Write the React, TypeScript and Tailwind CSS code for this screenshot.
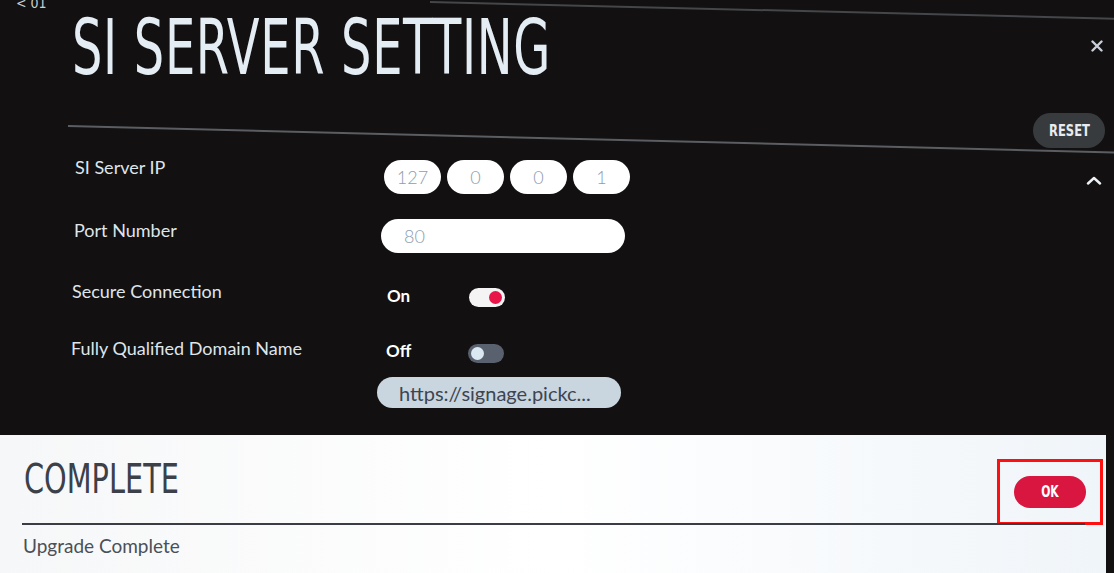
import React from 'react';

const ipParts = ['127', '0', '0', '1'];

const Toggle: React.FC<{ on: boolean }> = ({ on }) => (
  <div
    className={`w-[36px] h-[19px] rounded-full flex items-center px-[3px] ${on ? 'bg-[#f4f4f4] justify-end' : 'bg-[#5a616e] justify-start'}`}
  >
    <div className={`w-[13px] h-[13px] rounded-full ${on ? 'bg-[#e8174a]' : 'bg-[#dbe8f2]'}`} />
  </div>
);

const App: React.FC = () => {
  const cond = { fontFamily: '"DejaVu Sans Condensed", "DejaVu Sans", sans-serif' };
  const body = { fontFamily: 'Lato, "Noto Sans", sans-serif' };

  return (
    <div className="w-[1114px] h-[573px] bg-[#121010] overflow-hidden flex flex-col" style={body}>
      {/* Dark settings area */}
      <div className="h-[435px] shrink-0 flex flex-col relative">
        {/* faint top rule */}
        <div className="absolute left-[430px] top-[1px] w-[700px] h-[2px] bg-[#44464a] origin-left rotate-[1.4deg]" />
        <div className="absolute left-[16px] top-[-7px] text-[14px] text-[#c9ced6]" style={cond}>
          &lt; 01
        </div>

        {/* Header */}
        <div className="h-[125px] shrink-0 flex justify-between">
          <div className="pl-[72px] pt-[10px]">
            <h1
              className="text-[76px] leading-none text-[#e4ecf4] origin-left scale-x-[0.7] whitespace-nowrap tracking-[1px]"
              style={cond}
            >
              SI SERVER SETTING
            </h1>
          </div>
          <div className="flex flex-col items-end pr-[9px] pt-[40px]">
            <svg width="12" height="12" viewBox="0 0 12 12" className="shrink-0 mr-[2px]">
              <path d="M1.5 1.5 L10.5 10.5 M10.5 1.5 L1.5 10.5" stroke="#c9ceda" strokeWidth="2.4" strokeLinecap="round" />
            </svg>
            <button
              className="shrink-0 mt-[61px] w-[72px] h-[35px] rounded-full bg-[#383b3d] text-[#e8ecf0] text-[16px] font-bold"
              style={cond}
            >
              <span className="inline-block scale-x-[0.8]">RESET</span>
            </button>
          </div>
        </div>

        {/* rule under title */}
        <div className="shrink-0 ml-[68px] w-[1060px] h-[2px] bg-[#5a5d62] origin-left rotate-[1.45deg]" />

        {/* Rows */}
        <div className="flex">
          <div className="flex-1">
            <div className="flex h-[40px] mt-[30px] pl-[75px]">
              <div className="w-[309px] text-[18px] leading-5 text-[#dfe5ec]">SI Server IP</div>
              <div className="flex gap-[6px] mt-[3px]">
                {ipParts.map((p, i) => (
                  <div
                    key={i}
                    className="w-[57px] h-[34px] rounded-full bg-white flex items-center justify-center text-[18px] font-light text-[#8d9db0]"
                  >
                    {p}
                  </div>
                ))}
              </div>
            </div>

            <div className="flex h-[34px] mt-[22px] pl-[74px]">
              <div className="w-[307px] text-[18px] leading-5 text-[#dfe5ec] mt-[1px]">Port Number</div>
              <div className="w-[244px] h-[34px] rounded-full bg-white flex items-center pl-[23px] text-[18px] font-light text-[#8d9db0]">
                80
              </div>
            </div>

            <div className="flex h-[26px] mt-[28px] pl-[72px]">
              <div className="w-[315px] text-[18px] leading-5 text-[#dfe5ec]">Secure Connection</div>
              <div className="w-[82px] text-[17px] font-bold text-white leading-5 mt-[5px]">On</div>
              <div className="mt-[7px]">
                <Toggle on />
              </div>
            </div>

            <div className="flex h-[25px] mt-[31px] pl-[71px]">
              <div className="w-[315px] text-[18px] leading-5 text-[#dfe5ec]">Fully Qualified Domain Name</div>
              <div className="w-[82px] text-[17px] font-bold text-white leading-5 mt-[3px]">Off</div>
              <div className="mt-[6px]">
                <Toggle on={false} />
              </div>
            </div>

            <div className="flex mt-[14px] pl-[377px]">
              <div className="w-[244px] h-[31px] rounded-full bg-[#c9d6e0] flex items-center pl-[22px] text-[20px] text-[#3d4550] whitespace-nowrap">
                https://signage.pickc...
              </div>
            </div>
          </div>
          <div className="w-[40px] pt-[49px] flex justify-center">
            <svg width="16" height="9" viewBox="0 0 16 9">
              <path d="M2 7.5 L8 2 L14 7.5" stroke="#eef1f5" strokeWidth="2.4" fill="none" strokeLinecap="round" strokeLinejoin="round" />
            </svg>
          </div>
        </div>
      </div>

      {/* Complete popup */}
      <div className="flex-1 w-[1106px] bg-gradient-to-r from-[#f6f7f8] via-white to-[#f0f5f9] flex flex-col">
        <div className="h-[88px] shrink-0 flex justify-between pl-[24px] pr-[3px]">
          <div className="pt-[24px]">
            <h2 className="text-[40px] leading-none text-[#3b4049] origin-left scale-x-[0.8] whitespace-nowrap" style={cond}>
              COMPLETE
            </h2>
          </div>
          <div className="mt-[24px] w-[106px] h-[66px] border-[3px] border-[#ff1010] flex items-center justify-center">
            <button
              className="w-[72px] h-[32px] rounded-full bg-[#d9163f] text-white text-[15px] font-bold"
              style={cond}
            >
              <span className="inline-block scale-x-[0.8]">OK</span>
            </button>
          </div>
        </div>
        <div className="shrink-0 ml-[22px] w-[1063px] h-[2px] bg-[#3a3d44]" />
        <div className="pl-[23px] pt-[7px] text-[19px] text-[#4a4f58]">Upgrade Complete</div>
      </div>
    </div>
  );
};

export default App;
